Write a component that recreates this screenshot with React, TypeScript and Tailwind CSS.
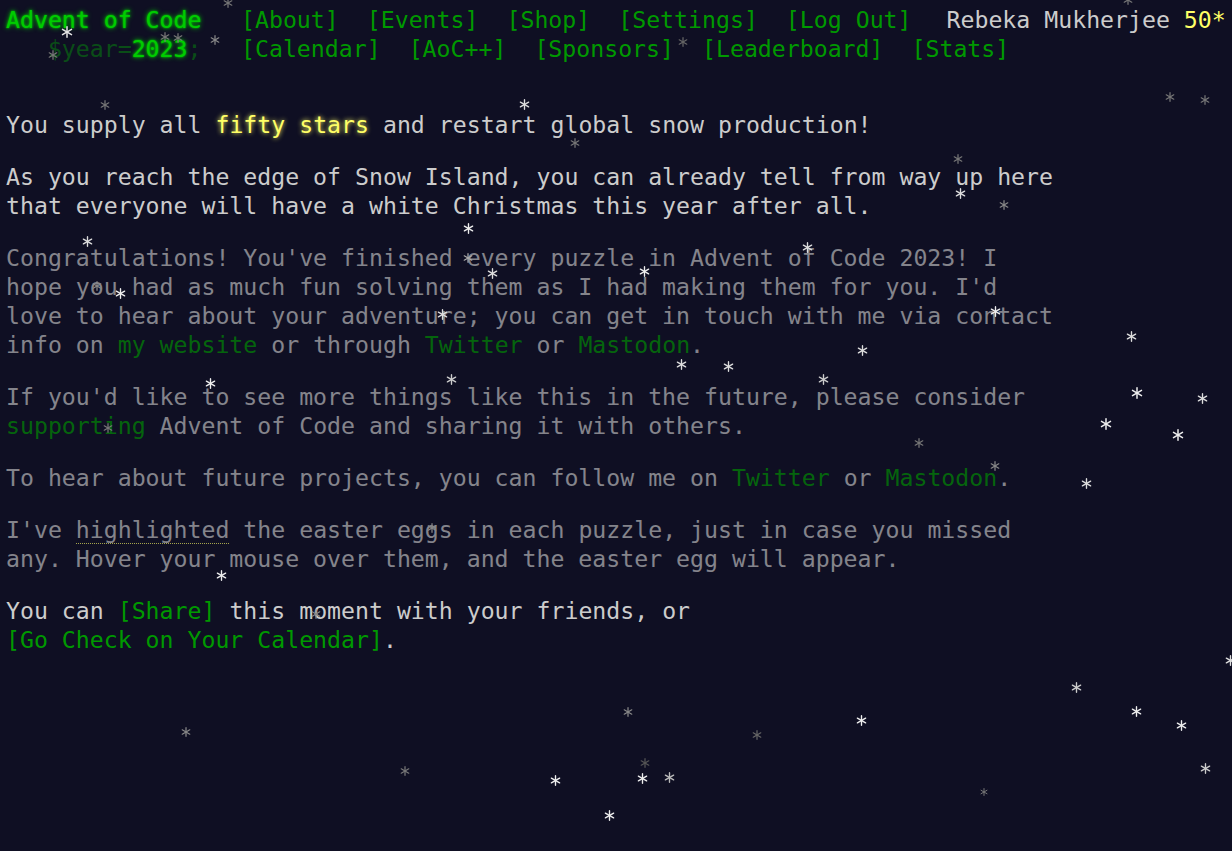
import React from "react";

type Flake = [number, number, number, string];

// snow: x, y, size, colour
const flakes: Flake[] = [
  [228, 3, 10, "#777"], [67, 32, 12, "#e6e6e6"], [165, 37, 10, "#777"], [178, 38, 10, "#777"],
  [215, 40, 10, "#888"], [53, 55, 10, "#777"], [683, 42, 10, "#666"], [1128, 0, 10, "#777"],
  [105, 105, 10, "#777"], [524, 104, 11, "#ddd"], [575, 143, 10, "#777"], [1170, 97, 10, "#777"],
  [1205, 100, 10, "#777"], [958, 159, 10, "#777"], [960, 193, 11, "#ddd"], [1004, 205, 10, "#888"],
  [468, 228, 11, "#eee"], [87, 241, 11, "#ddd"], [807, 247, 11, "#ddd"], [468, 258, 10, "#aaa"],
  [644, 271, 11, "#eee"], [492, 273, 11, "#ddd"], [97, 286, 10, "#888"], [120, 293, 11, "#eee"],
  [442, 314, 11, "#ddd"], [995, 311, 11, "#eee"], [1131, 336, 11, "#ddd"], [862, 350, 11, "#ddd"],
  [681, 364, 11, "#ddd"], [728, 366, 11, "#ddd"], [451, 379, 11, "#ccc"], [823, 379, 11, "#ccc"],
  [210, 383, 11, "#eee"], [1137, 393, 12, "#eee"], [1202, 398, 11, "#ddd"], [108, 428, 10, "#777"],
  [1106, 424, 12, "#eee"], [1178, 435, 12, "#eee"], [919, 443, 10, "#777"], [995, 466, 10, "#888"],
  [1086, 483, 11, "#ddd"], [432, 528, 10, "#888"], [221, 575, 11, "#eee"], [316, 614, 10, "#888"],
  [1230, 660, 11, "#ddd"], [1076, 687, 11, "#ccc"], [628, 712, 10, "#888"], [861, 720, 11, "#eee"],
  [1136, 711, 11, "#eee"], [1181, 725, 11, "#eee"], [186, 732, 10, "#888"], [757, 735, 10, "#666"],
  [645, 763, 10, "#555"], [405, 771, 10, "#777"], [555, 780, 11, "#eee"], [642, 778, 11, "#eee"],
  [669, 777, 11, "#bbb"], [1205, 768, 11, "#ccc"], [984, 792, 8, "#777"], [609, 815, 11, "#eee"],
];

const Flake = ({ f }: { f: Flake }) => {
  const [x, y, s, c] = f;
  return (
    <svg
      className="absolute pointer-events-none"
      style={{ left: x - s / 2, top: y - s / 2 }}
      width={s}
      height={s}
      viewBox="0 0 12 12"
    >
      <g stroke={c} strokeWidth="1.5" strokeLinecap="round">
        <line x1="6" y1="0.8" x2="6" y2="11.2" />
        <line x1="1.5" y1="3.4" x2="10.5" y2="8.6" />
        <line x1="1.5" y1="8.6" x2="10.5" y2="3.4" />
      </g>
    </svg>
  );
};

const Link = ({ children }: { children: React.ReactNode }) => (
  <a href="#" className="text-[#009900] whitespace-nowrap">
    {children}
  </a>
);

const topNav = ["About", "Events", "Shop", "Settings", "Log Out"];
const subNav = ["Calendar", "AoC++", "Sponsors", "Leaderboard", "Stats"];

const App = () => {
  return (
    <div className="relative min-h-[851px] w-full overflow-hidden bg-[#0f0f23] text-[#cccccc] font-['DejaVu_Sans_Mono',monospace] text-[23.2px] leading-[29px]">
      <header className="pt-[5px]">
        <div className="flex whitespace-nowrap">
          <h1 className="w-[227px] pl-[6px]">
            <a href="#" className="text-[#00cc00] [text-shadow:0_0_2px_#00cc00,0_0_5px_#00cc00]">
              Advent of Code
            </a>
          </h1>
          <ul className="flex">
            {topNav.map((n) => (
              <li key={n} className="px-[14px]">
                <Link>[{n}]</Link>
              </li>
            ))}
          </ul>
          <div className="ml-[7px] pl-[14px]">
            Rebeka Mukherjee <span className="text-[#ffff66]">50*</span>
          </div>
        </div>
        <div className="flex whitespace-nowrap">
          <h1 className="w-[227px] pl-[6px] whitespace-pre">
            {"   "}
            <span className="text-[#00cc00] opacity-[0.33]">$year=</span>
            <a href="#" className="text-[#00cc00] [text-shadow:0_0_2px_#00cc00,0_0_5px_#00cc00]">
              2023
            </a>
            <span className="text-[#00cc00] opacity-[0.33]">;</span>
          </h1>
          <ul className="flex">
            {subNav.map((n) => (
              <li key={n} className="px-[14px]">
                <Link>[{n}]</Link>
              </li>
            ))}
          </ul>
        </div>
      </header>

      <main className="mt-[47px] pl-[6px]">
        <article className="w-[1056px]">
          <p className="mb-[23px]">
            You supply all{" "}
            <span className="text-[#ffff66] [text-shadow:0_0_5px_#ffff66]">fifty stars</span> and
            restart global snow production!
          </p>
          <p className="mb-[23px]">
            As you reach the edge of Snow Island, you can already tell from way up here that everyone
            will have a white Christmas this year after all.
          </p>
          <p className="mb-[23px] opacity-[0.62]">
            Congratulations! You've finished every puzzle in Advent of Code 2023! I hope you had as
            much fun solving them as I had making them for you. I'd love to hear about your adventure;
            you can get in touch with me via contact info on <Link>my website</Link> or through{" "}
            <Link>Twitter</Link> or <Link>Mastodon</Link>.
          </p>
          <p className="mb-[23px] opacity-[0.62]">
            If you'd like to see more things like this in the future, please consider{" "}
            <Link>supporting</Link> Advent of Code and sharing it with others.
          </p>
          <p className="mb-[23px] opacity-[0.62]">
            To hear about future projects, you can follow me on <Link>Twitter</Link> or{" "}
            <Link>Mastodon</Link>.
          </p>
          <p className="mb-[23px] opacity-[0.62]">
            I've{" "}
            <span className="border-b border-dotted border-[#ffff66]">highlighted</span> the easter
            eggs in each puzzle, just in case you missed any. Hover your mouse over them, and the
            easter egg will appear.
          </p>
          <p className="mb-[23px]">
            You can <Link>[Share]</Link> this moment with your friends, or{" "}
            <Link>[Go Check on Your Calendar]</Link>.
          </p>
        </article>
      </main>

      {flakes.map((f, i) => (
        <Flake key={i} f={f} />
      ))}
    </div>
  );
};

export default App;
